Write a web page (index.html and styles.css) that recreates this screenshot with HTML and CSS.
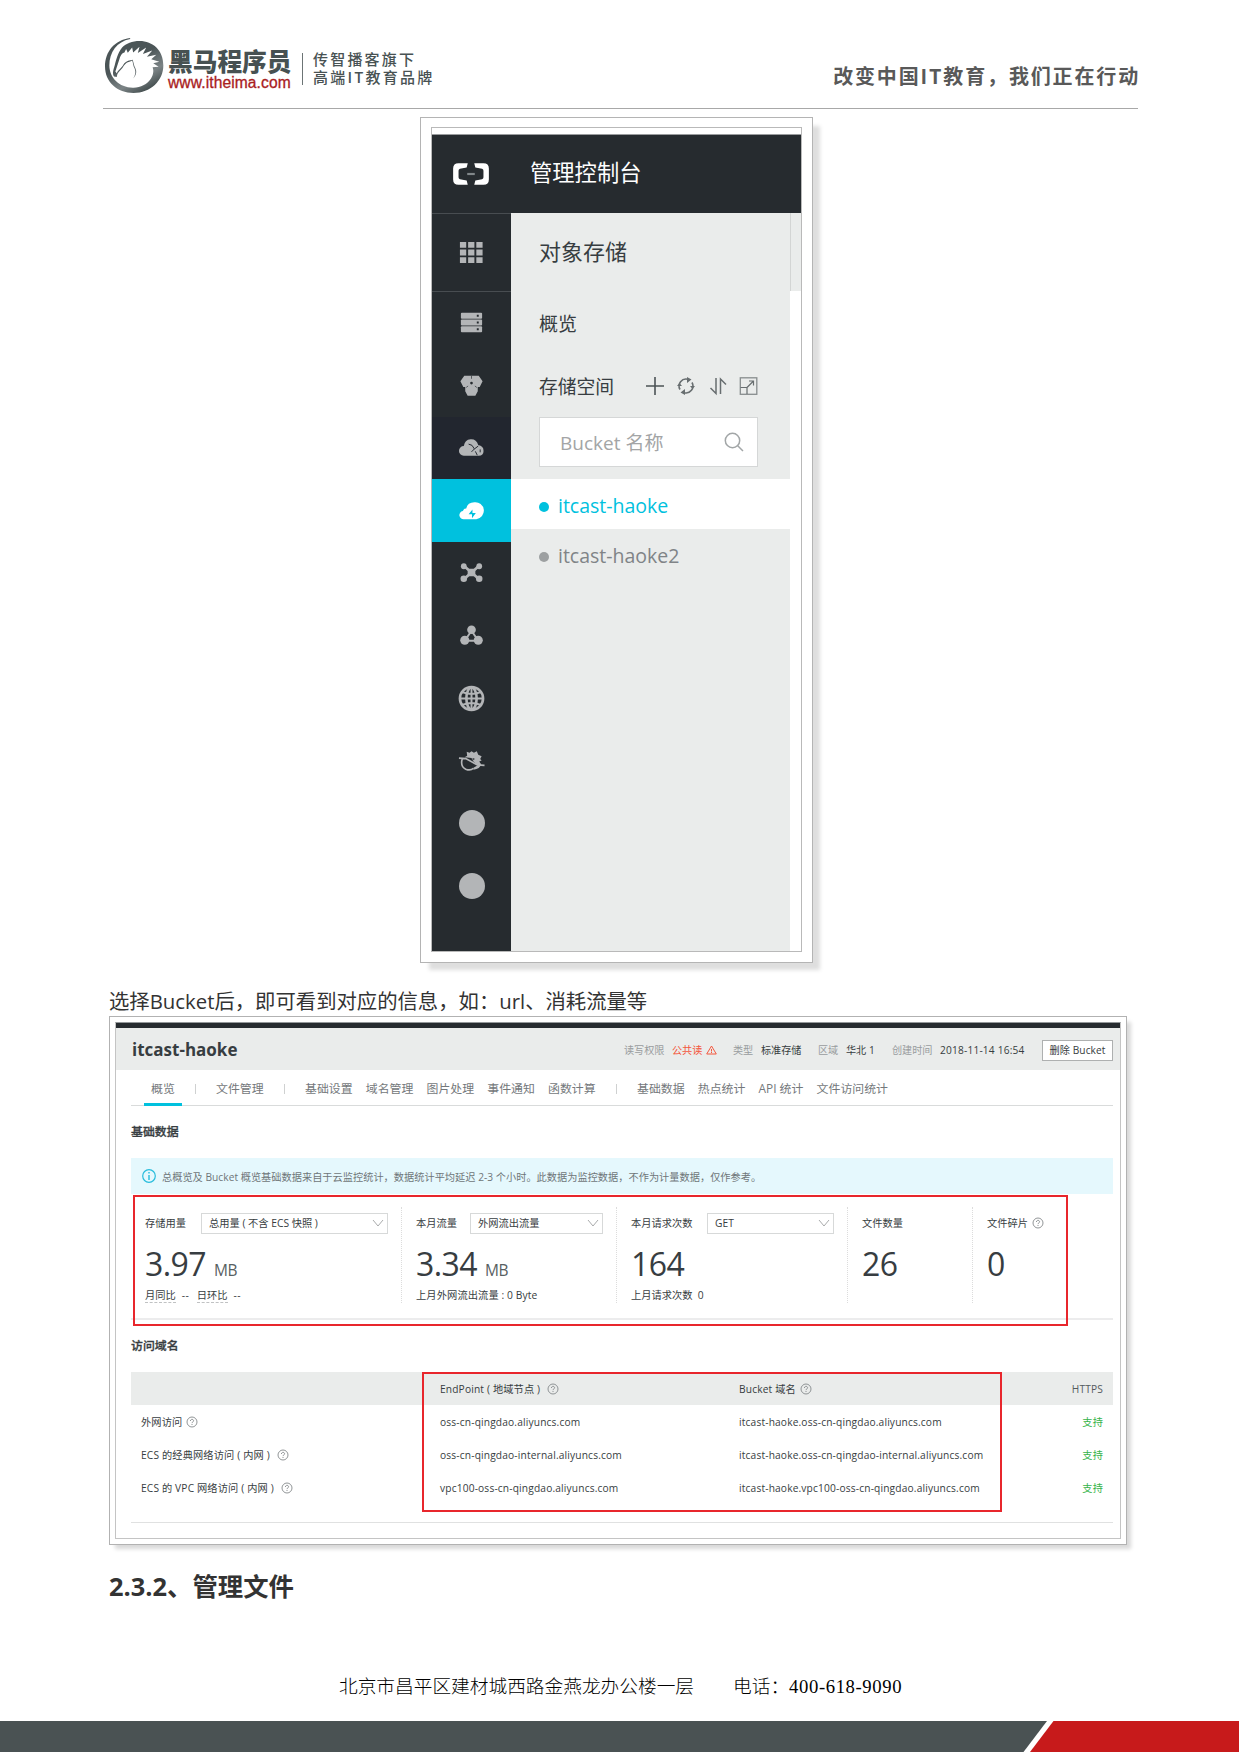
FILE: index.html
```html
<!DOCTYPE html>
<html lang="zh-CN">
<head>
<meta charset="utf-8">
<title>对象存储</title>
<link rel="stylesheet" href="styles.css">
</head>
<body>
<svg class="defs" width="0" height="0">
  <symbol id="help" viewBox="0 0 12 12"><circle cx="6" cy="6" r="5" fill="none" stroke="#85898b" stroke-width=".9"/><path d="M4.4 5C4.4 2.8 7.6 2.8 7.6 4.8C7.6 5.9 6 5.9 6 7.1M6 8V9" fill="none" stroke="#85898b" stroke-width=".9"/></symbol>
  <symbol id="chev" viewBox="0 0 12 8"><path d="M1 1L6 7L11 1" fill="none" stroke="#a9abac" stroke-width="1"/></symbol>
</svg>
<div class="page">
  <header class="head">
    <svg class="horse" viewBox="45 52 176 170">
      <defs><linearGradient id="ring" x1="0" y1="0" x2=".6" y2="1"><stop offset="0" stop-color="#4b5557"/><stop offset=".5" stop-color="#4b5557"/><stop offset=".8" stop-color="#7c8486"/><stop offset="1" stop-color="#4a5455"/></linearGradient></defs>
      <path fill="url(#ring)" d="M120 55C74 61 45 95 45 140C45 186 82 219 130 219C181 219 219 182 219 137C219 92 188 64 148 64C126 64 108 72 96 83C82 102 79 118 74 136C70 150 66 160 72 170L80 171L82 162C86 154 97 148 101 138C106 130 112 126 122 124C130 118 126 132 133 145C138 158 134 167 129 176C137 168 141 157 136 146C130 136 131 128 127 120C120 121 108 124 102 131C96 142 90 147 83 154L80 160L76 155C82 138 86 124 90 112C94 103 97 99 103 98L108 88L113 99L126 83L129 98L148 81L143 100L168 83L158 103L186 92L170 111L198 105L183 118L207 126L189 130L205 141L187 142C196 164 176 201 130 203C88 204 58 173 58 137C58 98 80 66 120 58Z"/>
    </svg>
    <div class="brand"><div class="brand-name">黑马程序员</div><div class="brand-url">www.itheima.com</div></div>
    <div class="tag"><div>传智播客旗下</div><div class="tag2">高端IT教育品牌</div></div>
    <div class="slogan">改变中国IT教育，我们正在行动</div>
  </header>

  <section class="console">
    <div class="console-in">
      <div class="c-top">
        <svg class="ali" width="42" height="26" viewBox="0 0 38 24"><path d="M16 2H7.500Q2.500 2 2.500 7V17Q2.500 22 7.500 22H16L15 18L8.800 16.800Q7.500 16.500 7.500 15V9Q7.500 7.500 8.800 7.200L15 6ZM22 2H30.500Q35.500 2 35.500 7V17Q35.500 22 30.500 22H22L23 18L29.200 16.800Q30.500 16.500 30.500 15V9Q30.500 7.500 29.200 7.200L23 6Z" fill="#fff"/><rect x="15.500" y="11" width="7" height="2" fill="#81878a"/></svg>
        <span>管理控制台</span>
      </div>
      <div class="c-body">
        <nav class="side">
          <div class="s-row grid-row"><svg viewBox="0 0 28 28"><path fill="#b3b5b7" d="M2 3h6.500v6H2zM10.500 3H17v6h-6.500zM19 3h6.500v6H19zM2 11h6.500v6H2zM10.500 11H17v6h-6.500zM19 11h6.500v6H19zM2 19h6.500v6H2zM10.500 19H17v6h-6.500zM19 19h6.500v6H19z"/></svg></div>
          <div class="s-row"><svg viewBox="0 0 28 28"><g fill="#b3b5b7"><rect x="3" y="4" width="22" height="6.200" rx="1"/><rect x="3" y="11" width="22" height="6.200" rx="1"/><rect x="3" y="18" width="22" height="6.200" rx="1"/></g><path fill="#262b2f" d="M19.500 6h2v2h-2zM19.500 13h2v2h-2zM19.500 20h2v2h-2z"/></svg></div>
          <div class="s-row"><svg viewBox="0 0 28 28"><path fill="#b3b5b7" d="M6.500 4H21.500L25.500 9.500L22.500 15.500H20.500V20L18 24.500H10L7.500 20V15.500H5.500L2.500 9.500Z"/><circle cx="14" cy="11.500" r="1.400" fill="#262b2f"/><path d="M14 4v3M8.500 16l2-1.500M19.500 16l-2-1.500" stroke="#262b2f" stroke-width=".7"/></svg></div>
          <div class="s-row deep"><svg viewBox="0 0 28 28"><path fill="#b3b5b7" d="M6 22.500a5 5 0 0 1 0-10q1-6.500 7-7q6-.5 8 6q5.500 1 5.500 6q0 5-5 5z"/><path d="M11 10.500q4 0 6 5l-3 3M17 15.500l4-3M20 22l-2-4M23 16v3" fill="none" stroke="#22262f" stroke-width="1"/></svg></div>
          <div class="s-row on"><svg viewBox="0 0 28 28"><path fill="#fff" d="M6.500 23A4.200 4.200 0 0 1 5 14.500Q6 12 8.500 12Q10 5.500 17 5.500A8.700 8.700 0 0 1 19 23Z"/><path d="M15 13l-4 5h3.500v4l4-5.500H15z" fill="#00c1de"/></svg></div>
          <div class="s-row"><svg viewBox="0 0 28 28"><path d="M6 7Q14 14 22 21M22 7Q14 14 6 21" stroke="#b3b5b7" stroke-width="2.800" fill="none"/><g fill="#b3b5b7"><rect x="10" y="10" width="8" height="8" rx="2"/><circle cx="6" cy="7.500" r="3"/><circle cx="22" cy="7.500" r="3"/><circle cx="6" cy="20.500" r="3.400"/><circle cx="22" cy="20.500" r="3.400"/></g></svg></div>
          <div class="s-row"><svg viewBox="0 0 28 28"><path d="M14 9L7 19.500H21Z" stroke="#b3b5b7" stroke-width="2" fill="none"/><g fill="#b3b5b7"><circle cx="14" cy="8" r="4.500"/><circle cx="7" cy="19" r="4.700"/><circle cx="21" cy="19" r="4.700"/></g></svg></div>
          <div class="s-row"><svg viewBox="0 0 28 28"><g fill="none" stroke="#b3b5b7" stroke-width="2.700"><circle cx="14" cy="14" r="12"/><ellipse cx="14" cy="14" rx="5.300" ry="11.500"/><path d="M14 2v24M3 14h22M5 7.500Q14 11 23 7.500M5 20.500Q14 17 23 20.500" stroke-width="2"/></g></svg></div>
          <div class="s-row"><svg viewBox="0 0 28 28"><path d="M4.500 12Q2 20 8 23Q13 25 16 22M1 11.500L8 12L20 18.500L27.500 19" fill="none" stroke="#b3b5b7" stroke-width="1.700"/><path d="M7 10.500L9.500 9L9 5L12 6L14 4.500L16.500 6L19.500 4.500L21 8L24.500 9.500L23 12.500L24.500 14L22 15L24 18Q23 23 16 23.500L16 21.500L20.500 19L16 15L14 11.500Z" fill="#b3b5b7"/><circle cx="16" cy="12.500" r="1.200" fill="#4b4f52"/></svg></div>
          <div class="s-row"><i></i></div>
          <div class="s-row"><i></i></div>
        </nav>
        <div class="menu">
          <div class="m-title">对象存储</div>
          <div class="m-over">概览</div>
          <div class="m-space"><span>存储空间</span>
            <svg width="116" height="20" viewBox="0 0 116 20" fill="none" stroke="#686e70" stroke-width="1.600">
              <path d="M10 1v18M1 10h18" stroke="#4c5356"/>
              <g transform="translate(31 0)"><path d="M4 13.500A7 7 0 0 1 12 3.300M16 6.500A7 7 0 0 1 8 16.700"/><path d="M11 1l4.500 2.500L11 7zM9 13l-4.500 3.500L9 19zM1 10h5L3.500 7zM19 10h-5l2.500 3z" fill="#686e70" stroke="none"/></g>
              <path d="M71 2V17.500L65.500 12M75.500 18V3L81 8.500" stroke-width="1.500"/>
              <g transform="translate(9.500 0)"><rect x="85.800" y="1.800" width="16.500" height="16.500" stroke="#888d8e" stroke-width="1.300"/><path d="M86 11.500h6.500V18M92.500 11.500L99 5M94.500 5H99V9.500" stroke-width="1.200"/></g>
            </svg>
          </div>
          <div class="m-search"><span>Bucket 名称</span><svg width="20" height="20" viewBox="0 0 20 20" fill="none" stroke="#a2a6a7" stroke-width="1.500"><circle cx="8.500" cy="8.500" r="7.200"/><path d="M13.500 13.500L19 19"/></svg></div>
          <div class="m-item active"><b></b>itcast-haoke</div>
          <div class="m-item"><b></b>itcast-haoke2</div>
        </div>
        <div class="strip"></div>
      </div>
    </div>
  </section>

  <p class="para">选择Bucket后，即可看到对应的信息，如：url、消耗流量等</p>

  <section class="bucket">
    <div class="bucket-in">
      <div class="b-head">
        <h2>itcast-haoke</h2>
        <div class="meta">
          <span class="k w1">读写权限</span><span class="red w2">公共读</span>
          <svg class="warn" width="11" height="10" viewBox="0 0 11 10" fill="none" stroke="#f4573d" stroke-width="1"><path d="M5.500 1L10.300 9H.7ZM5.500 4v2.500M5.500 7v1"/></svg>
          <span class="k w3">类型</span><span class="w4">标准存储</span><span class="k w5">区域</span><span class="w6">华北 1</span><span class="k w7">创建时间</span><span class="w8">2018-11-14 16:54</span>
          <span class="btn">删除 Bucket</span>
        </div>
      </div>
      <div class="content">
        <nav class="tabs">
          <span class="cur">概览</span><i></i><span class="t2">文件管理</span><i></i>
          <div class="grp">
            <span>基础设置</span><span>域名管理</span><span>图片处理</span><span>事件通知</span><span>函数计算</span>
          </div><i class="i3"></i>
          <div class="grp g2"><span>基础数据</span><span>热点统计</span><span>API 统计</span><span>文件访问统计</span></div>
        </nav>
        <h3 class="h-base">基础数据</h3>
        <div class="info"><svg width="16" height="16" viewBox="0 0 16 16" fill="none" stroke="#27bcdc" stroke-width="1.200"><circle cx="8" cy="8" r="6.300"/><path d="M8 7v5M8 4v1.500" stroke-width="1.400"/></svg><span>总概览及 Bucket 概览基础数据来自于云监控统计，数据统计平均延迟 2-3 个小时。此数据为监控数据，不作为计量数据，仅作参考。</span></div>
        <div class="stats">
          <div class="st a"><div class="lab"><span>存储用量</span><div class="sel">总用量 ( 不含 ECS 快照 )<svg width="12" height="8"><use href="#chev"/></svg></div></div><div class="num">3.97<small>MB</small></div><div class="sub"><u>月同比</u><span class="dd">--</span><u>日环比</u><span class="dd">--</span></div></div>
          <div class="st b"><div class="lab"><span>本月流量</span><div class="sel">外网流出流量<svg width="12" height="8"><use href="#chev"/></svg></div></div><div class="num">3.34<small>MB</small></div><div class="sub">上月外网流出流量 : 0 Byte</div></div>
          <div class="st c"><div class="lab"><span>本月请求次数</span><div class="sel">GET<svg width="12" height="8"><use href="#chev"/></svg></div></div><div class="num">164</div><div class="sub">上月请求次数&nbsp; 0</div></div>
          <div class="st d"><div class="lab"><span>文件数量</span></div><div class="num">26</div></div>
          <div class="st e"><div class="lab"><span>文件碎片</span><svg class="q" width="12" height="12"><use href="#help"/></svg></div><div class="num">0</div></div>
          <div class="mark m1"></div>
        </div>
        <h3 class="h-dom">访问域名</h3>
        <div class="table">
          <div class="tr th"><span></span><span>EndPoint ( 地域节点 )<svg class="q g" width="12" height="12"><use href="#help"/></svg></span><span>Bucket 域名<svg class="q" width="12" height="12"><use href="#help"/></svg></span><span class="r">HTTPS</span></div>
          <div class="tr"><span>外网访问<svg class="q" width="12" height="12"><use href="#help"/></svg></span><span>oss-cn-qingdao.aliyuncs.com</span><span>itcast-haoke.oss-cn-qingdao.aliyuncs.com</span><span class="r">支持</span></div>
          <div class="tr"><span>ECS 的经典网络访问 ( 内网 )<svg class="q g" width="12" height="12"><use href="#help"/></svg></span><span>oss-cn-qingdao-internal.aliyuncs.com</span><span>itcast-haoke.oss-cn-qingdao-internal.aliyuncs.com</span><span class="r">支持</span></div>
          <div class="tr"><span>ECS 的 VPC 网络访问 ( 内网 )<svg class="q g" width="12" height="12"><use href="#help"/></svg></span><span>vpc100-oss-cn-qingdao.aliyuncs.com</span><span>itcast-haoke.vpc100-oss-cn-qingdao.aliyuncs.com</span><span class="r">支持</span></div>
          <div class="mark m2"></div>
        </div>
      </div>
    </div>
  </section>

  <h1>2.3.2、管理文件</h1>
  <div class="addr"><span>北京市昌平区建材城西路金燕龙办公楼一层</span><span class="tel">电话：</span><span class="telno">400-618-9090</span></div>
  <svg class="bar" width="1240" height="31" viewBox="0 0 1240 31"><path fill="#4a5253" d="M0 0H1047L1023.500 31H0Z"/><path fill="#c71a1b" d="M1053.500 0H1239V31H1030Z"/></svg>
</div>
</body>
</html>
```
FILE: styles.css
```css
* { box-sizing: border-box; }
body { margin: 0; background: #fff; font-family: "Open Sans", "Noto Sans CJK SC", sans-serif; color: #373d41; }
.defs { position: absolute; }
.page { position: relative; width: 1240px; height: 1752px; overflow: hidden; display: flex; flex-direction: column; }
h1, h2, h3, p { margin: 0; }
span, div { white-space: nowrap; }

.head { height: 109px; margin: 0 102px 0 103px; border-bottom: 1px solid #a8a8a8; display: flex; align-items: flex-start; flex: none; }
.horse { width: 59px; height: 57px; margin: 37px 0 0 2px; }
.brand { width: 134px; margin: 48px 0 0 4px; }
.brand-name { font: 900 24.7px/26px "Noto Sans CJK SC", sans-serif; color: #475152; height: 27px; margin-top: -1px; }
.brand-url { font: 15.6px/18px "Liberation Sans", sans-serif; color: #a9201d; -webkit-text-stroke: .3px #a9201d; letter-spacing: .1px; }
.tag { margin-top: 53px; height: 32px; border-left: 1px solid #6c7475; padding-left: 10px; font: 500 15px/17px "Noto Sans CJK SC", sans-serif; letter-spacing: 2.2px; color: #485253; }
.tag div { margin-top: -3px; height: 20px; }
.tag .tag2 { margin-top: -2px; letter-spacing: 2.2px; }
.slogan { margin: 62px 0 0 auto; font: 700 20px/28px "Noto Sans CJK SC", sans-serif; letter-spacing: 1.85px; margin-right: -2px; color: #595959; }

.console { width: 393px; height: 846px; flex: none; margin: 8px 0 0 420px; border: 1px solid #b4b4b4; padding: 9px 10px 10px; background: #fff; box-shadow: 8px 8px 4px -1px #dedede; }
.console-in { height: 825px; border: 1px solid #b9b9b9; padding-top: 6px; display: flex; flex-direction: column; }
.c-top { height: 79px; background: #262b2f; border-top: 1px solid #9a9c9e; display: flex; align-items: center; color: #fff; font-size: 22.300px; line-height: 30px; padding-bottom: 2px; }
.ali { margin: 1px 38px 0 18px; }
.c-body { flex: 1; display: flex; }
.side { width: 79px; background: #262b2f; border-top: 1px solid #484d51; }
.s-row { height: 62.550px; display: flex; align-items: center; justify-content: center; }
.s-row svg { width: 27px; height: 27px; }
.s-row i { width: 26px; height: 26px; border-radius: 50%; background: #b3b5b7; }
.grid-row { height: 77.500px; border-bottom: 1px solid #484d51; }
.deep { background: #22262f; }
.on { background: #00c1de; }
.menu { width: 279px; background: #eaeceb; }
.m-title { height: 78px; line-height: 76px; padding-left: 28px; font-size: 22px; }
.m-over { height: 62px; line-height: 66px; padding-left: 28px; font-size: 19px; }
.m-space { height: 64px; padding: 2px 0 0 28px; font-size: 18.800px; display: flex; align-items: center; gap: 31px; }
.m-search { margin: 0 32px 12px 28px; height: 50px; border: 1px solid #d5d7d7; background: #fff; display: flex; align-items: center; justify-content: space-between; padding: 0 13px 0 20px; font-size: 19px; color: #a3a5a6; }
.m-item { height: 50px; display: flex; align-items: center; padding: 2px 0 0 28px; font-size: 19.500px; color: #808487; }
.m-item b { width: 10px; height: 10px; border-radius: 50%; background: #9da0a1; margin: 3px 9px 0 0; }
.m-item.active { background: #fff; color: #00c1de; }
.m-item.active b { background: #00c1de; }
.strip { flex: 1; height: 78px; background: #eaeceb; border-left: 1px solid #d3d5d4; }

.para { height: 53px; padding: 26px 0 0 109px; font-size: 20.350px; line-height: 24px; color: #333; flex: none; }

.bucket { width: 1018px; height: 529px; flex: none; margin-left: 109px; border: 1px solid #b2b2b2; padding: 5px; background: #fff; box-shadow: 5px 5px 4px -1px #d9d9d9; }
.bucket-in { height: 517px; border: 1px solid #c4c4c4; border-top-color: #94989a; }
.b-head { height: 47px; border-top: 5px solid #262b2f; background: #eaeceb; display: flex; align-items: center; justify-content: space-between; padding: 2px 7px 0 16px; }
h2 { font-size: 17px; line-height: 24px; }
.meta { display: flex; align-items: center; font-size: 10.150px; line-height: 14px; }
.k { color: #999c9e; }
.red { color: #f4573d; }
.warn { width: 11px; margin-right: 16px; }
.w1 { width: 48px; } .w7 { width: 48px; } .w2 { width: 34px; } .w3, .w5 { width: 28px; } .w4 { width: 57px; } .w6 { width: 46px; } .w8 { width: 102px; letter-spacing: .2px; }
.btn { width: 71px; height: 21px; border: 1px solid #aeb0b0; background: #fff; text-align: center; line-height: 19px; letter-spacing: .1px; }
.content { padding: 0 7px 0 15px; }
.tabs { height: 36px; border-bottom: 1px solid #d9dbdb; display: flex; font-size: 11.900px; line-height: 36px; color: #74787b; align-items: flex-start; }
.tabs i { width: 1px; height: 10px; background: #cfd1d1; margin: 14px 20px 0 0; }
.tabs .cur { width: 38px; height: 36px; margin: 0 13px; border-bottom: 3px solid #00c1de; text-align: center; }
.t2 { width: 68px; }
.grp { display: flex; gap: 13.200px; width: 311px; }
.g2 { width: auto; }
h3 { font-size: 11.900px; line-height: 18px; font-weight: 500; -webkit-text-stroke: .3px #373d41; }
.h-base { padding-top: 16px; height: 52px; }
.info { height: 36px; background: #e5f8fd; padding: 0 0 0 10px; display: flex; align-items: center; font-size: 10.200px; letter-spacing: .02px; color: #6f7679; gap: 5px; }
.stats { position: relative; height: 126px; border-bottom: 2px solid #ececed; display: flex; padding: 13px 0 0; font-size: 10.250px; }
.st { height: 96px; border-right: 1px dotted #dcdcdc; padding-left: 14px; display: flex; flex-direction: column; }
.a { width: 271px; } .b { width: 215px; } .c { width: 231px; } .d { width: 125px; } .e { border: 0; }
.lab { height: 22px; margin-top: 5px; display: flex; align-items: center; justify-content: space-between; padding-right: 13px; }
.lab > span { position: relative; top: -.5px; }
.e .lab { justify-content: flex-start; }
.sel { height: 21px; border: 1px solid #d7d9d9; padding: 0 2px 0 7px; display: flex; align-items: center; justify-content: space-between; line-height: 18px; }
.sel svg { margin-right: 1px; }
.a .sel { width: 187px; } .b .sel { width: 133px; } .c .sel { width: 127px; }
.num { font-size: 32px; line-height: 44px; margin-top: 8px; height: 44px; display: flex; align-items: baseline; letter-spacing: -.6px; }
.num small { font-size: 15.500px; margin-left: 8px; letter-spacing: -.4px; color: #595f62; }
.sub { line-height: 14px; display: flex; padding-top: 2px; }
.sub u { text-decoration: none; border-bottom: 1px dashed #c0c2c3; }
.dd { width: 21px; padding-left: 6px; letter-spacing: .5px; }
.b .sub { letter-spacing: .1px; }
.q { margin-left: 4px; flex: none; }
.q.g { margin-left: 7px; }
.mark { position: absolute; border: 2px solid #e8262c; z-index: 2; }
.m1 { left: 2px; top: 1px; width: 935px; height: 131px; }
.h-dom { padding-top: 16px; height: 52px; }
.table { position: relative; border-bottom: 1px solid #e0e1e1; height: 151px; font-size: 10.200px; letter-spacing: .16px; }
.tr { height: 33px; display: grid; grid-template-columns: 299px 299px 1fr 80px; padding: 0 10px; align-items: center; }
.tr > span { display: flex; align-items: center; line-height: 16px; }
.th { background: #eaeceb; height: 33px; }
.tr .r { justify-content: flex-end; color: #35b34a; }
.th .r { color: #555b5e; }
.m2 { left: 291px; top: 0; width: 580px; height: 140px; }

h1 { font-size: 25.400px; line-height: 40px; margin: 21px 0 0 109px; flex: none; color: #333; }
.addr { margin: 71px 0 0 339px; font: 400 18.700px/20px "Liberation Serif", "Noto Sans CJK SC", serif; color: #000; display: flex; }
.addr span { font-weight: 300; }
.tel { margin-left: 39px; width: 56px; }
.addr .telno { letter-spacing: .6px; font-weight: 400; }
.bar { margin-top: auto; flex: none; display: block; }
```
